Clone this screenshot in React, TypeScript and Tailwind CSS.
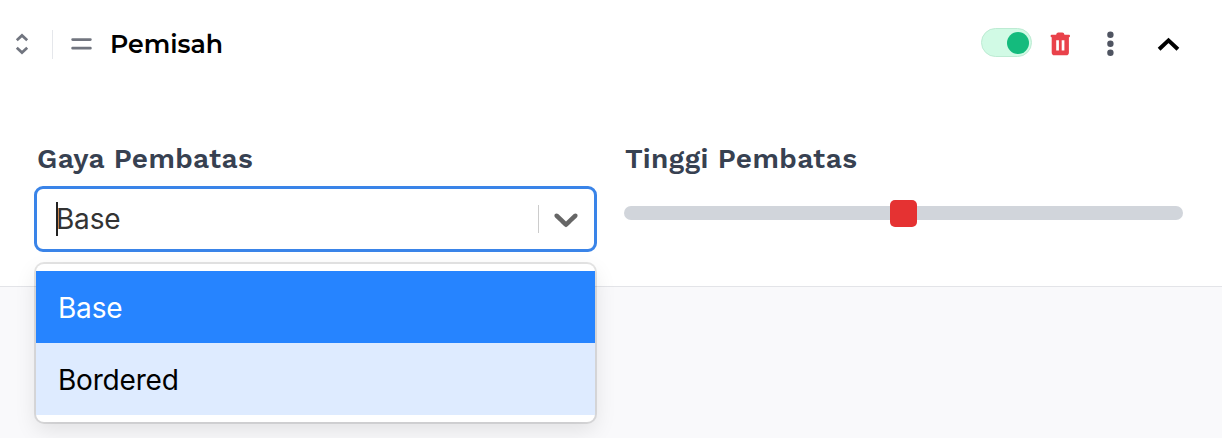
import type { ReactNode } from "react";

const OPTIONS = ["Base", "Bordered"];

function SortIcon() {
	return (
		<svg width="14" height="22" viewBox="0 0 14 22" fill="none" stroke="#71757f" strokeWidth="2.7">
			<path d="M1.8 7.2L7 2.4L12.2 7.2M1.8 14.8L7 19.6L12.2 14.8" />
		</svg>
	);
}

function DragIcon() {
	return (
		<svg width="22" height="12" viewBox="0 0 22 12" stroke="#71757f" strokeWidth="2.7" strokeLinecap="round">
			<path d="M1.6 1.6H19.4M1.6 10.2H19.4" />
		</svg>
	);
}

function TrashIcon() {
	return (
		<svg width="20" height="24" viewBox="0 0 20 24">
			<path
				fill="#e9424b"
				fillRule="evenodd"
				d="M6.1 2.8Q6.5 .4 8.3 .4H12.3Q14.1 .4 14.5 2.8H19Q20 2.8 20 4Q20 5.3 19 5.3H18.9V20.4Q18.9 23.2 16.1 23.2H4.5Q1.7 23.2 1.7 20.4V5.3H1.6Q.6 5.3 .6 4Q.6 2.8 1.6 2.8ZM6.2 8.2V18.6H8.9V8.2ZM11.7 8.2V18.6H14.4V8.2Z"
			/>
		</svg>
	);
}

function DotsIcon() {
	return (
		<svg width="8" height="26" viewBox="0 0 8 26" fill="#4f5461">
			<circle cx="4.4" cy="3.8" r="3.2" />
			<circle cx="4.4" cy="12.8" r="3.2" />
			<circle cx="4.4" cy="21.8" r="3.2" />
		</svg>
	);
}

function CollapseIcon() {
	return (
		<svg width="24" height="16" viewBox="0 0 24 16" fill="none" stroke="#000" strokeWidth="4">
			<path d="M2.1 13.2L11.5 4.4L20.9 13.2" />
		</svg>
	);
}

function Field({ label, children }: { label: string; children: ReactNode }) {
	return (
		<div>
			<div className="flex h-[35px] items-center whitespace-nowrap pb-px pl-px font-['Work_Sans','Open_Sans',sans-serif] text-[28px] font-[650] tracking-[0.4px] text-[#374151]">
				{label}
			</div>
			{children}
		</div>
	);
}

function StyleSelect() {
	return (
		<div className="relative mt-[9px] -ml-[2px] w-[563px] font-[Inter,sans-serif] text-[28px] tracking-[-0.2px]">
			<div className="flex h-[66px] items-center rounded-[9px] border-3 border-[#3a84e8] bg-white">
				<div className="relative flex h-[34px] flex-1 items-center pl-[19px] text-[#333]">
					<span className="absolute left-[19px] top-0 h-[34px] w-[2px] bg-[#222]" />
					<span className="leading-none">Base</span>
				</div>
				<div className="h-7 w-px bg-[#ccc]" />
				<svg className="ml-[7px] mr-2" width="40" height="40" viewBox="0 0 20 20" fill="#666">
					<path d="M4.516 7.548c.436-.446 1.043-.481 1.576 0L10 11.295l3.908-3.747c.533-.481 1.141-.446 1.574 0 .436.445.408 1.197 0 1.615-.406.418-4.695 4.502-4.695 4.502a1.095 1.095 0 0 1-1.574 0S4.924 9.581 4.516 9.163s-.436-1.17 0-1.615z" />
				</svg>
			</div>
			<div className="absolute left-[2px] top-[78px] w-[559px] rounded-lg bg-white py-[7px] shadow-[0_0_0_2px_rgba(0,0,0,0.1),0_8px_22px_rgba(0,0,0,0.1)]">
				{OPTIONS.map((option, index) => (
					<div
						key={option}
						className={`flex h-[72px] items-center pl-[22px] pt-[2px] ${
							index === 0 ? "bg-[#2684ff] text-white" : "bg-[#deebff] text-black"
						}`}
					>
						{option}
					</div>
				))}
			</div>
		</div>
	);
}

export default function App() {
	return (
		<div className="h-[438px] w-[1222px] overflow-hidden bg-[#f9f9fb]">
			<section className="h-[287px] border-b border-[#e3e4e8] bg-white">
				<header className="flex h-[88px] items-center pl-[15px] pr-[41px]">
					<SortIcon />
					<div className="ml-[23px] mr-[18px] h-[29px] w-px bg-[#e5e7eb]" />
					<DragIcon />
					<h2 className="ml-[17px] whitespace-nowrap font-['Montserrat','Open_Sans',sans-serif] text-[25.2px] font-semibold leading-[26px] text-black">
						Pemisah
					</h2>
					<div className="ml-auto flex items-center">
						<div className="-mt-[3px] flex h-[29px] w-[51px] items-center justify-end rounded-full border border-[#bdebd3] bg-[#d1fae5] pr-[2px]">
							<div className="size-[22px] rounded-full bg-[#14bb7d]" />
						</div>
						<div className="ml-[18px]">
							<TrashIcon />
						</div>
						<div className="ml-9">
							<DotsIcon />
						</div>
						<div className="ml-[43px]">
							<CollapseIcon />
						</div>
					</div>
				</header>
				<div className="mt-[54px] flex pl-9">
					<div className="w-[588px] shrink-0">
						<Field label="Gaya Pembatas">
							<StyleSelect />
						</Field>
					</div>
					<div className="w-[559px]">
						<Field label="Tinggi Pembatas">
							<div className="mt-[22px] flex h-[28px] items-center">
								<div className="flex h-[14px] w-full items-center justify-center rounded-full bg-[#d1d5db]">
									<div className="size-[27px] rounded-[5px] bg-[#e53232]" />
								</div>
							</div>
						</Field>
					</div>
				</div>
			</section>
		</div>
	);
}
